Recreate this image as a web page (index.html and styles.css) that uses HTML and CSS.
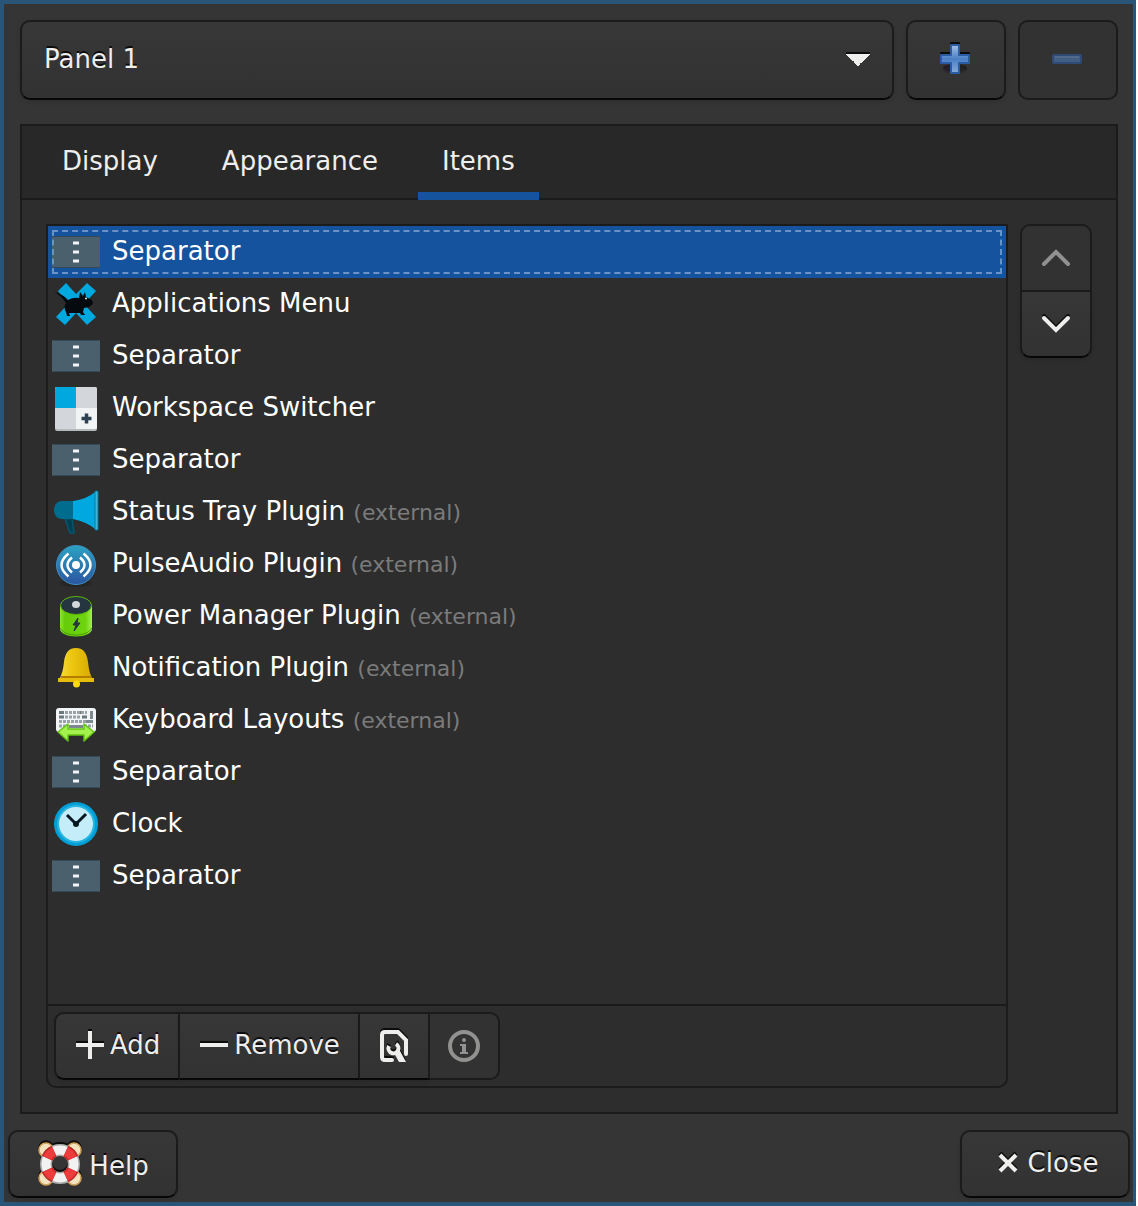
FILE: index.html
```html
<!DOCTYPE html>
<html lang="en">
<head>
<meta charset="utf-8">
<title>Panel</title>
<link rel="stylesheet" href="styles.css">
</head>
<body>
<svg class="defs" aria-hidden="true">
  <defs>
    <linearGradient id="plus-fill" x1="0" y1="0" x2="0" y2="1">
      <stop offset="0" stop-color="#a3c0e4"/><stop offset=".5" stop-color="#4a7fc4"/><stop offset="1" stop-color="#86abd9"/>
    </linearGradient>
    <linearGradient id="audio-fill" x1="0" y1="0" x2="0" y2="1">
      <stop offset="0" stop-color="#2ba3c4"/><stop offset="1" stop-color="#2b55a0"/>
    </linearGradient>
    <linearGradient id="bell-fill" x1="0" y1="0" x2="1" y2="0">
      <stop offset="0" stop-color="#f6dc3c"/><stop offset=".35" stop-color="#edc711"/><stop offset="1" stop-color="#d6a900"/>
    </linearGradient>
    <linearGradient id="battery-fill" x1="0" y1="0" x2="1" y2="0">
      <stop offset="0" stop-color="#8ee52f"/><stop offset=".15" stop-color="#66cc0a"/><stop offset=".8" stop-color="#6ed40e"/><stop offset="1" stop-color="#a5f04e"/>
    </linearGradient>
    <symbol id="i-separator" viewBox="0 0 48 48">
      <rect y="8" width="48" height="32" fill="#34495a"/>
      <rect y="9" width="48" height="30" fill="#4a606d"/>
      <path d="M21 15h6M21 24h6M21 33h6" stroke="#f2f4f5" stroke-width="3"/>
    </symbol>
    <symbol id="i-menu" viewBox="0 0 48 48">
      <path d="M14 3l10 11L35 3l9 8-12 13 12 13-9 8-11-12-11 12-9-8 12-13L6 11z" fill="#00a8e0"/>
      <path d="M2 12q9 2 14 8 5-3 11-2l1-6 3 4 2-4 1 5 6 3 1 4-4 3-5 1-1 4 2 3h-4l-1-2H17l1 3h-3l-1-4q-3-5 0-9Q9 15 2 12z" fill="#050a0e"/>
      <circle cx="34" cy="18.500" r="1" fill="#dfe6e8"/>
    </symbol>
    <symbol id="i-workspace" viewBox="0 0 48 48">
      <rect x="3" y="3" width="42" height="44" rx="2" fill="#b4b9bc"/>
      <rect x="3" y="3" width="42" height="42" rx="2" fill="#d3d7db"/>
      <path d="M24 24h21v19q0 2-2 2H24z" fill="#f1f3f4"/>
      <path d="M5 3h19v21H3V5q0-2 2-2z" fill="#00a8e0"/>
      <path d="M34.500 29.500v10M29.500 34.500h10" stroke="#2d4152" stroke-width="3.500"/>
    </symbol>
    <symbol id="i-tray" viewBox="0 0 48 48">
      <path d="M13 31l5 14h4l-2-15z" fill="#003f52" stroke="#00586f" stroke-width="1.500"/>
      <path d="M21 13H10C5 13 2 17 2 22s3 9 8 9h11z" fill="#006c8e"/>
      <path d="M21 13q14-2 22-9v37q-8-7-22-10z" fill="#00a8e0"/>
      <rect x="43" y="3" width="3" height="39" rx="1" fill="#3fb3d6" stroke="#007ca5"/>
    </symbol>
    <symbol id="i-audio" viewBox="0 -1 48 48">
      <ellipse cx="24" cy="42" rx="16" ry="4" fill="#202020" opacity=".5"/>
      <circle cx="24" cy="24" r="19.500" fill="url(#audio-fill)" stroke="#3d8fc4"/>
      <circle cx="24" cy="24" r="4" fill="#fff"/>
      <path d="M20 16.500q-9 7.500 0 15M28 16.500q9 7.500 0 15M16.500 12.500q-14 11.500 0 23M31.500 12.500q14 11.500 0 23" fill="none" stroke="#fff" stroke-width="2.500"/>
    </symbol>
    <symbol id="i-power" viewBox="0 0 48 48">
      <path d="M8 13v24c0 4 7 7.500 16 7.500S40 41 40 37V13z" fill="url(#battery-fill)"/>
      <path d="M8.500 36c1 4 8 7 15.500 7s14.500-3 15.500-7" fill="none" stroke="#4e9a06"/>
      <ellipse cx="24" cy="13.500" rx="15.500" ry="9" fill="#263640" stroke="#5ab80a"/>
      <ellipse cx="24" cy="12.500" rx="4" ry="3.500" fill="#d3d7d9"/>
      <path d="M26 26l-5 7h3l-2 6 6-8h-3z" fill="#263640" stroke="#263640"/>
    </symbol>
    <symbol id="i-bell" viewBox="0 0 48 48">
      <path d="M24 4c-8 0-11 6-12 14-1 9-2 11-4 16h32c-2-5-3-7-4-16C35 10 32 4 24 4z" fill="url(#bell-fill)"/>
      <path d="M9 32h30v2H9z" fill="#b57d00"/>
      <path d="M6 34h36v4H6z" fill="#e6bd0b"/>
      <circle cx="24.500" cy="40" r="3.500" fill="#fcd90f"/>
    </symbol>
    <symbol id="i-keyboard" viewBox="0 0 48 48">
      <rect x="4" y="12" width="40" height="24" rx="3" fill="#f3f4f5"/>
      <g stroke="#98a2a8" stroke-width="3">
        <path d="M7 16.500h5M26 16.500h4" stroke="#6b7880"/>
        <path d="M13 16.500h22" stroke-dasharray="3 1"/>
        <path d="M7 21h5M30 21h5" stroke="#6b7880"/>
        <path d="M13 21h16" stroke-dasharray="3 1"/>
        <path d="M7 25.500h28" stroke-dasharray="3 1"/>
        <path d="M34 25.500h7M17 30.500h14M39.500 15v8" stroke="#7d8990"/>
        <path d="M7 30h9M32 30h9" stroke-dasharray="3 1"/>
      </g>
      <path d="M6 36l10-8v5h16v-5l10 8-10 9v-6H16v6z" fill="#a3f24d" stroke="#63c312" stroke-width="1.500" stroke-linejoin="round"/>
    </symbol>
    <symbol id="i-clock" viewBox="0 0 48 48">
      <circle cx="24" cy="24" r="22" fill="#00a0d6"/>
      <circle cx="24" cy="24" r="19" fill="#27b5e2"/>
      <circle cx="24" cy="24" r="17" fill="#c4edf9"/>
      <path d="M15 15l9 9 10-10" fill="none" stroke="#081820" stroke-width="3"/>
      <circle cx="24" cy="24" r="3" fill="#081820"/>
    </symbol>
  </defs>
</svg>

<main class="window">
  <div class="selector">
    <select class="btn combo" aria-label="Panel"><option>Panel 1</option></select>
    <button class="btn square" type="button" aria-label="Add panel">
      <svg class="icon32" viewBox="1 1 32 32"><ellipse cx="16" cy="27" rx="12" ry="4" fill="#262626" opacity=".5"/><path d="M12 2h8v10h10v8H20v10h-8V20H2v-8h10z" fill="url(#plus-fill)" stroke="#2a5ca6" stroke-width="2" stroke-linejoin="round"/></svg>
    </button>
    <button class="btn square" type="button" aria-label="Remove panel" disabled>
      <svg class="icon32" viewBox="1 1 32 32"><rect x="2" y="12" width="28" height="8" rx="1" fill="#415d84" stroke="#2f4b75" stroke-width="2"/><path d="M4 14h24" stroke="#52698a" stroke-width="2"/></svg>
    </button>
  </div>

  <section class="notebook">
    <div class="tabs" role="tablist">
      <button class="tab" type="button" role="tab" aria-selected="false">Display</button>
      <button class="tab" type="button" role="tab" aria-selected="false">Appearance</button>
      <button class="tab" type="button" role="tab" aria-selected="true">Items</button>
    </div>
    <div class="page" role="tabpanel">
      <div class="items">
        <ul class="list" role="listbox" aria-label="Items">
          <li class="row" role="option" aria-selected="true"><svg class="icon48"><use href="#i-separator"/></svg><span>Separator</span></li>
          <li class="row" role="option"><svg class="icon48"><use href="#i-menu"/></svg><span>Applications Menu</span></li>
          <li class="row" role="option"><svg class="icon48"><use href="#i-separator"/></svg><span>Separator</span></li>
          <li class="row" role="option"><svg class="icon48"><use href="#i-workspace"/></svg><span>Workspace Switcher</span></li>
          <li class="row" role="option"><svg class="icon48"><use href="#i-separator"/></svg><span>Separator</span></li>
          <li class="row" role="option"><svg class="icon48"><use href="#i-tray"/></svg><span>Status Tray Plugin <small>(external)</small></span></li>
          <li class="row" role="option"><svg class="icon48"><use href="#i-audio"/></svg><span>PulseAudio Plugin <small>(external)</small></span></li>
          <li class="row" role="option"><svg class="icon48"><use href="#i-power"/></svg><span>Power Manager Plugin <small>(external)</small></span></li>
          <li class="row" role="option"><svg class="icon48"><use href="#i-bell"/></svg><span>Notification Plugin <small>(external)</small></span></li>
          <li class="row" role="option"><svg class="icon48"><use href="#i-keyboard"/></svg><span>Keyboard Layouts <small>(external)</small></span></li>
          <li class="row" role="option"><svg class="icon48"><use href="#i-separator"/></svg><span>Separator</span></li>
          <li class="row" role="option"><svg class="icon48"><use href="#i-clock"/></svg><span>Clock</span></li>
          <li class="row" role="option"><svg class="icon48"><use href="#i-separator"/></svg><span>Separator</span></li>
        </ul>
        <div class="toolbar">
          <button class="btn tool text" type="button"><svg class="icon32" viewBox="0 0 32 32"><path d="M16 2v28M2 16h28" stroke="currentColor" stroke-width="4"/></svg>Add</button>
          <button class="btn tool text" type="button"><svg class="icon32" viewBox="0 0 32 32"><path d="M2 16h28" stroke="currentColor" stroke-width="4"/></svg>Remove</button>
          <button class="btn tool" type="button" aria-label="Edit item"><svg class="icon32" viewBox="0 0 32 32"><path d="M14 30H7q-3 0-3-3V5q0-3 3-3h13l8 8v14" fill="none" stroke="currentColor" stroke-width="4" stroke-linecap="round"/><path d="M11 16a5 5 0 1 0 7-2" fill="none" stroke="currentColor" stroke-width="4"/><path d="M16 23l5-4 7 13h-7z" fill="currentColor"/></svg></button>
          <button class="btn tool" type="button" aria-label="About item" disabled><svg class="icon32" viewBox="0 0 32 32"><circle cx="16" cy="16" r="14" fill="none" stroke="currentColor" stroke-width="4"/><circle cx="16" cy="10" r="2" fill="currentColor"/><path d="M12 14h6v8h2v2h-8v-2h2v-6h-2z" fill="currentColor"/></svg></button>
        </div>
      </div>
      <div class="mover">
        <button class="btn move" type="button" aria-label="Move up" disabled><svg class="icon32" viewBox="0 0 32 32"><path d="M4 22l12-12 12 12" fill="none" stroke="currentColor" stroke-width="4" stroke-linecap="round"/></svg></button>
        <button class="btn move" type="button" aria-label="Move down"><svg class="icon32" viewBox="0 0 32 32"><path d="M4 10l12 12 12-12" fill="none" stroke="currentColor" stroke-width="4" stroke-linecap="round"/></svg></button>
      </div>
    </div>
  </section>

  <footer class="actions">
    <button class="btn action help" type="button">
      <svg class="icon48" viewBox="1 0 48 48">
        <g fill="#f5e2bf" stroke="#cf9f58" stroke-width="1.500"><circle cx="10" cy="10" r="7"/><circle cx="38" cy="10" r="7"/><circle cx="10" cy="38" r="7"/><circle cx="38" cy="38" r="7"/></g>
        <circle cx="24" cy="24" r="14" fill="none" stroke="#a8a8a8" stroke-width="12"/>
        <circle cx="24" cy="24" r="14" fill="none" stroke="#f2f2f2" stroke-width="9"/>
        <circle cx="24" cy="24" r="14" fill="none" stroke="#c22626" stroke-width="12" pathLength="80" stroke-dasharray="9 11" stroke-dashoffset="-5.500"/>
        <circle cx="24" cy="24" r="14" fill="none" stroke="#ec3c3c" stroke-width="9" pathLength="80" stroke-dasharray="9 11" stroke-dashoffset="-5.500"/>
      </svg><span>Help</span></button>
    <button class="btn action text" type="button">
      <svg class="icon32" viewBox="0 0 32 32"><path d="M8 8l16 16M24 8L8 24" stroke="currentColor" stroke-width="4"/></svg>Close</button>
  </footer>
</main>
</body>
</html>
```
FILE: styles.css
```css
* { box-sizing: border-box; }

body {
  margin: 0;
  background: #fff;
  color: #eeeeec;
  font: 26px/32px "DejaVu Sans", sans-serif;
}

.defs { position: absolute; width: 0; height: 0; }

.window {
  display: flex;
  flex-direction: column;
  min-height: 100vh;
  margin-right: 2px;
  padding: 16px 0 4px;
  border: 4px solid #285578;
  border-right-width: 3px;
  background: #353535;
}

.icon32, .icon48 { flex: none; width: 32px; height: 32px; }
.icon48 { width: 48px; height: 48px; }

.btn {
  display: flex;
  align-items: center;
  justify-content: center;
  margin: 0;
  padding: 0;
  border: 2px solid #1b1b1b;
  border-bottom-color: #070707;
  border-radius: 10px;
  background: linear-gradient(#373737, #323232);
  box-shadow: 0 2px 4px rgba(0, 0, 0, .1);
  color: #eeeeec;
  font: inherit;
  text-shadow: 0 -2px #0c0c0c;
}
.btn svg { filter: drop-shadow(0 -2px #0c0c0c); }
.btn:disabled {
  border-color: #1b1b1b;
  background: #323232;
  box-shadow: none;
  color: #919190;
}
.btn:disabled svg { filter: none; }

.selector { display: flex; gap: 12px; padding: 0 15px 0 16px; }
.combo {
  flex: 1;
  height: 80px;
  padding: 0 22px 2px;
  appearance: none;
  background:
    conic-gradient(from -45deg at 50% 100%, #eeeeec 90deg, transparent 0) right 22px center / 24px 12px no-repeat,
    linear-gradient(#0c0c0c, #0c0c0c) right 22px top 30px / 24px 2px no-repeat,
    linear-gradient(#373737, #323232);
}
.square { width: 100px; height: 80px; }

.notebook {
  display: flex;
  flex: 1;
  flex-direction: column;
  margin: 24px 15px 16px 16px;
  border: 2px solid #1b1b1b;
  background: #2d2d2d;
}
.tabs {
  display: flex;
  gap: 16px;
  height: 74px;
  padding: 0 16px;
  border-bottom: 2px solid #1b1b1b;
  background: #282828;
}
.tab {
  height: 74px;
  padding: 0 24px 4px;
  border: 0;
  background: none;
  color: #eeeeec;
  font: inherit;
}
.tab[aria-selected="true"] { box-shadow: inset 0 -8px #15539e; }

.page { display: flex; flex: 1; gap: 12px; padding: 24px; }
.items {
  display: flex;
  flex: 1;
  flex-direction: column;
  border: 2px solid #1b1b1b;
  border-radius: 0 0 10px 10px;
}
.list { flex: 1; margin: 0; padding: 0; list-style: none; }
.row {
  display: flex;
  align-items: center;
  gap: 12px;
  height: 52px;
  padding: 0 4px;
  color: #fff;
}
.row span { padding-bottom: 2px; }
.row small { color: #7b7b7b; font-size: 22px; line-height: 1; }
.row[aria-selected="true"] {
  background: #15539e;
  outline: 2px dashed #6a92c4;
  outline-offset: -6px;
}
.toolbar { display: flex; padding: 6px; border-top: 2px solid #1b1b1b; }
.tool { height: 68px; padding: 0 18px; border-radius: 0; gap: 4px; }
.tool + .tool { border-left: 0; }
.tool:first-child { border-radius: 10px 0 0 10px; }
.tool:last-child { border-radius: 0 10px 10px 0; }
.text { padding-bottom: 3px; }

.mover { display: flex; flex-direction: column; width: 72px; }
.move { height: 68px; border-radius: 0 0 10px 10px; }
.move:first-child { height: 66px; border-bottom: 0; border-radius: 10px 10px 0 0; }

.actions { display: flex; justify-content: space-between; padding: 0 3px 0 4px; }
.action { width: 170px; height: 68px; gap: 4px; }
.help span { padding-top: 4px; }
```
